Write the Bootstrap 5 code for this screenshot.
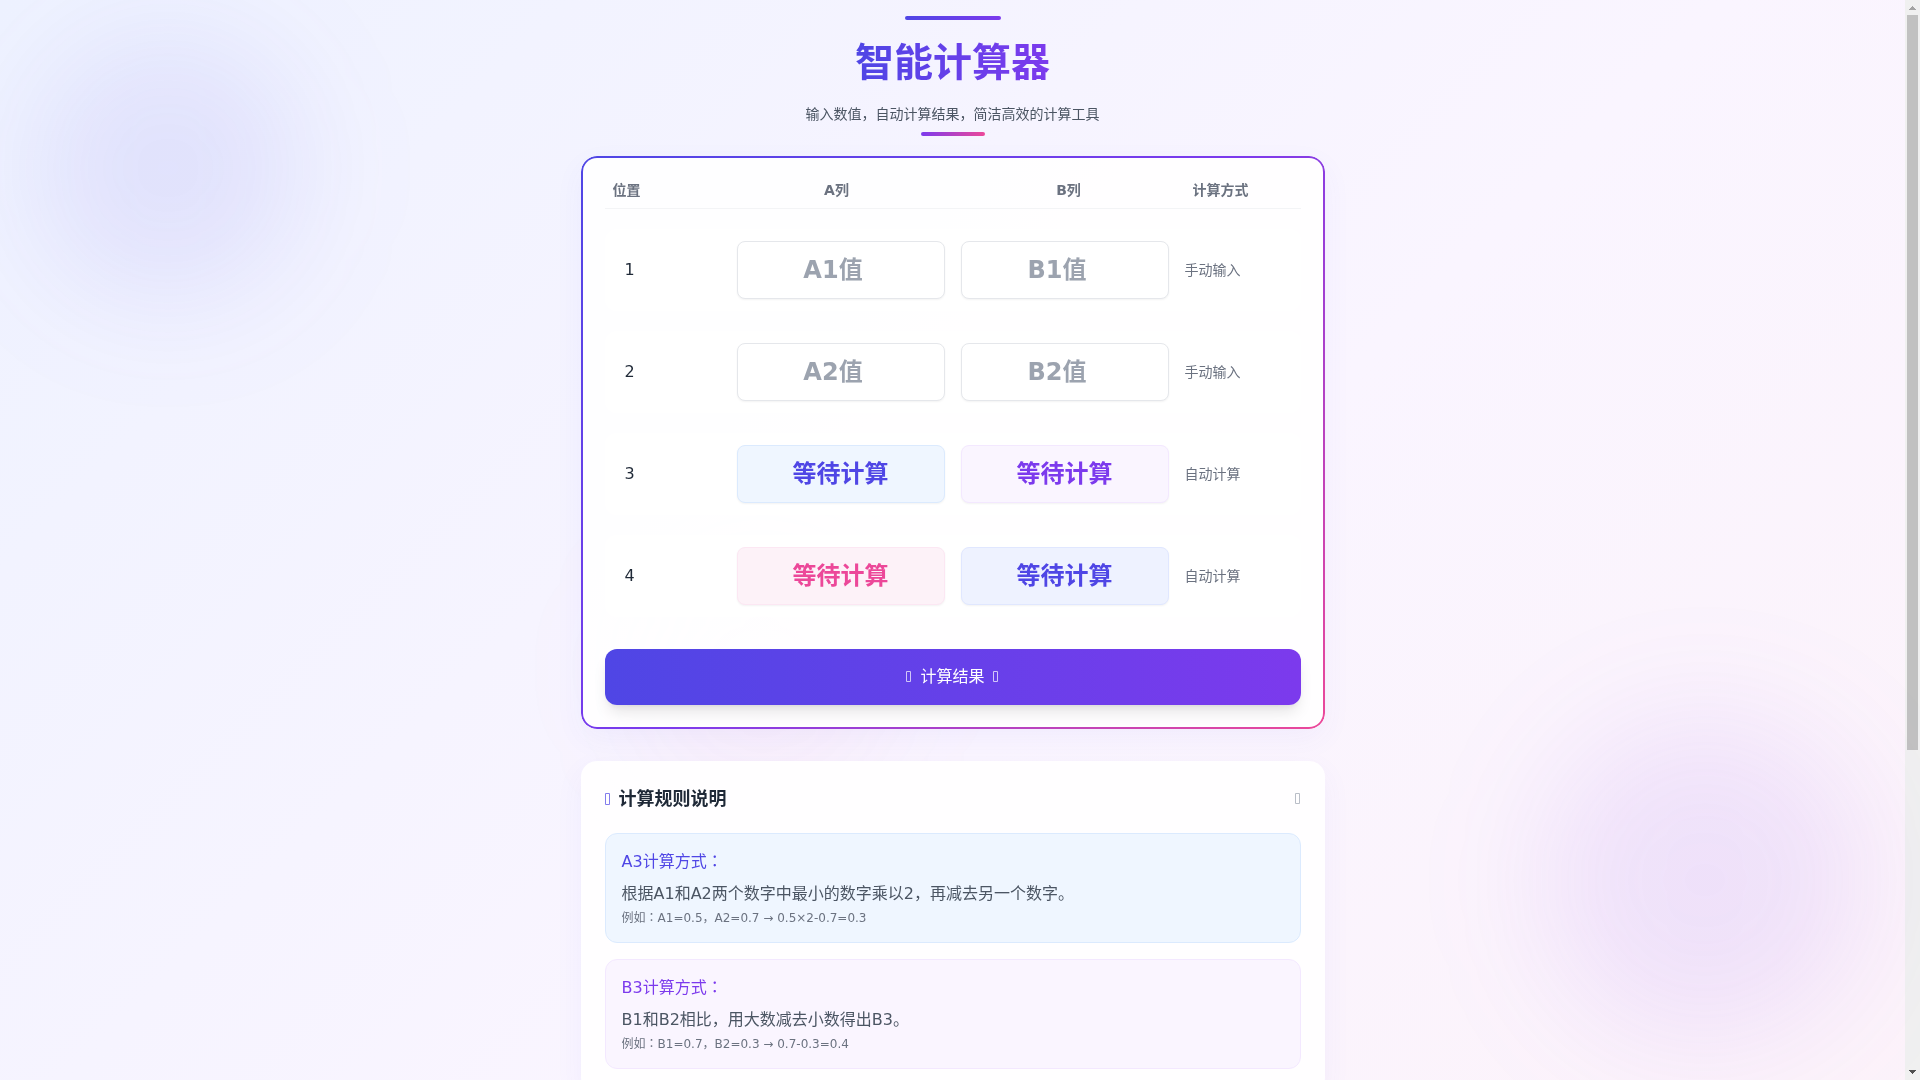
<!DOCTYPE html>
<html lang="zh-CN">
<head>
<meta charset="utf-8">
<meta name="viewport" content="width=device-width, initial-scale=1">
<title>智能计算器</title>
<link href="https://cdn.jsdelivr.net/npm/bootstrap@5.3.0/dist/css/bootstrap.min.css" rel="stylesheet">
<style>
  :root { --indigo: #4f46e5; --violet: #7c3aed; --pink: #ec4899; }
  body { font-family: "DejaVu Sans", "Noto Sans CJK SC", sans-serif; font-size: 16px; line-height: 24px; color: #1f2937; }
  .page-scroll { overflow-y: auto; scrollbar-width: none; }
  .scroll-rail { width: 15px; background: #f0f0f0; }
  .scroll-rail svg { flex: none; width: 15px; height: 15px; }
  .rail-track { padding: 0 2px; }
  .rail-thumb { height: 70%; background: #c1c1c1; }
  .page-bg { background: linear-gradient(135deg, #eef2ff, #faf5ff 50%, #fdf2f8); padding-bottom: 452px; }
  .glow { position: fixed; width: 256px; height: 256px; border-radius: 50%; filter: blur(64px); pointer-events: none; }
  .glow-a { top: 40px; left: 40px; background: rgba(79, 70, 229, .1); }
  .glow-b { width: 320px; height: 320px; right: 55px; bottom: 40px; background: rgba(124, 58, 237, .1); }
  .glow-c { top: 50%; left: 33%; background: rgba(236, 72, 153, .05); }
  .wrap { max-width: 768px; padding: 16px 12px 0; }
  .rule-bar { height: 4px; border-radius: 4px; }
  .bar-top { width: 96px; background: linear-gradient(90deg, var(--indigo), var(--violet)); }
  .bar-sub { width: 64px; background: linear-gradient(90deg, var(--violet), var(--pink)); }
  .page-title { padding-top: 2px; font-size: 39px; line-height: 50px; font-weight: 700; background: linear-gradient(90deg, var(--indigo), var(--violet)); -webkit-background-clip: text; background-clip: text; color: transparent; }
  .t14 { font-size: 14px; line-height: 20px; }
  .ink-soft { color: #4b5563; }
  .ink-mute { color: #6b7280; }
  .panel { border-radius: 16px; background: rgba(255, 255, 255, .9); padding: 24px; box-shadow: 0 10px 30px rgba(79, 70, 229, .05); }
  .panel-main { margin-top: 20px; }
  .panel-rules { margin-top: 32px; }
  .panel-edge::before { content: ""; position: absolute; inset: 0; border-radius: 16px; padding: 2px; background: linear-gradient(135deg, var(--indigo), var(--violet), var(--pink)); -webkit-mask: linear-gradient(#000 0 0) content-box, linear-gradient(#000 0 0); -webkit-mask-composite: xor; mask-composite: exclude; pointer-events: none; }
  .grid-head { padding-bottom: 8px; border-bottom: 1px solid #f3f4f6; font-weight: 700; }
  .grid-line { padding: 12px; margin-top: 20px; border-radius: 12px; background: rgba(255, 255, 255, .5); }
  .cell { height: 58px; padding: 12px; border: 1px solid #e5e7eb; border-radius: 8px; background: #fff; font-size: 24px; line-height: 32px; font-weight: 700; text-align: center; box-shadow: 0 1px 2px rgba(0, 0, 0, .05); display: block; width: 100%; }
  .cell::placeholder { color: #9ca3af; opacity: 1; }
  .tone-blue { background: #eff6ff; border-color: #dbeafe; }
  .tone-violet { background: #faf5ff; border-color: #f3e8ff; }
  .tone-pink { background: #fdf2f8; border-color: #fce7f3; }
  .tone-indigo { background: #eef2ff; border-color: #e0e7ff; }
  .ink-indigo { color: var(--indigo); }
  .ink-violet { color: var(--violet); }
  .ink-pink { color: var(--pink); }
  .calc-btn { margin-top: 32px; height: 56px; border: 0; border-radius: 12px; color: #fff; font-size: 16px; background: linear-gradient(90deg, var(--indigo), var(--violet)); box-shadow: 0 10px 15px -3px rgba(0, 0, 0, .1), 0 4px 6px -4px rgba(0, 0, 0, .1); }
  .rules-head { margin-bottom: 20px; }
  .rules-title { font-size: 18px; line-height: 28px; font-weight: 700; }
  .fold-btn { border: 0; background: none; padding: 0; color: #9ca3af; }
  .rule-box { border-width: 1px; border-style: solid; border-radius: 12px; padding: 16px; }
  .t12 { font-size: 12px; line-height: 16px; }
  .mid-colon { font-family: "Noto Sans CJK TC", sans-serif; line-height: 1; }
  .box-glyph { fill: none; stroke: currentColor; stroke-width: 1; opacity: .7; flex: none; }
</style>
</head>
<body class="d-flex vh-100 overflow-hidden">
<div class="page-scroll h-100 flex-grow-1">
  <div class="page-bg position-relative">
    <div class="glow glow-a"></div>
    <div class="glow glow-b"></div>
    <div class="glow glow-c"></div>
    <main class="wrap container-fluid mx-auto position-relative">
      <header class="d-flex flex-column align-items-center text-center">
        <div class="rule-bar bar-top"></div>
        <h1 class="page-title my-3">智能计算器</h1>
        <p class="t14 ink-soft mb-2">输入数值，自动计算结果，简洁高效的计算工具</p>
        <div class="rule-bar bar-sub"></div>
      </header>

      <section class="panel panel-edge panel-main position-relative">
        <div class="grid-head t14 ink-mute row g-0">
          <div class="col-2 px-2">位置</div>
          <div class="col-4 text-center">A列</div>
          <div class="col-4 text-center">B列</div>
          <div class="col-2 px-2">计算方式</div>
        </div>
        <div class="grid-line row g-0 align-items-center">
          <div class="col-2 px-2">1</div>
          <div class="col-4 px-2"><input class="cell" type="number" placeholder="A1值" aria-label="A1值"></div>
          <div class="col-4 px-2"><input class="cell" type="number" placeholder="B1值" aria-label="B1值"></div>
          <div class="col-2 px-2 t14 ink-mute">手动输入</div>
        </div>
        <div class="grid-line row g-0 align-items-center">
          <div class="col-2 px-2">2</div>
          <div class="col-4 px-2"><input class="cell" type="number" placeholder="A2值" aria-label="A2值"></div>
          <div class="col-4 px-2"><input class="cell" type="number" placeholder="B2值" aria-label="B2值"></div>
          <div class="col-2 px-2 t14 ink-mute">手动输入</div>
        </div>
        <div class="grid-line row g-0 align-items-center">
          <div class="col-2 px-2">3</div>
          <div class="col-4 px-2"><output class="cell tone-blue ink-indigo">等待计算</output></div>
          <div class="col-4 px-2"><output class="cell tone-violet ink-violet">等待计算</output></div>
          <div class="col-2 px-2 t14 ink-mute">自动计算</div>
        </div>
        <div class="grid-line row g-0 align-items-center">
          <div class="col-2 px-2">4</div>
          <div class="col-4 px-2"><output class="cell tone-pink ink-pink">等待计算</output></div>
          <div class="col-4 px-2"><output class="cell tone-indigo ink-indigo">等待计算</output></div>
          <div class="col-2 px-2 t14 ink-mute">自动计算</div>
        </div>
        <button type="button" class="calc-btn w-100 d-flex align-items-center justify-content-center gap-2">
          <svg class="box-glyph" width="6" height="12" viewBox="0 0 6 12" aria-hidden="true"><path d="M.5 .5h4v10h-4z"/></svg>
          <span>计算结果</span>
          <svg class="box-glyph" width="6" height="12" viewBox="0 0 6 12" aria-hidden="true"><path d="M.5 .5h4v10h-4z"/></svg>
        </button>
      </section>

      <section class="panel panel-rules">
        <div class="rules-head d-flex align-items-center justify-content-between">
          <h2 class="rules-title mb-0 d-flex align-items-center gap-2">
            <svg class="box-glyph ink-indigo" width="6" height="12" viewBox="0 0 6 12" aria-hidden="true"><path d="M.5 .5h4v11h-4z"/></svg>
            <span>计算规则说明</span>
          </h2>
          <button type="button" class="fold-btn d-flex" aria-label="折叠">
            <svg class="box-glyph" width="6" height="12" viewBox="0 0 6 12" aria-hidden="true"><path d="M.5 .5h4v10h-4z"/></svg>
          </button>
        </div>
        <div class="d-flex flex-column gap-3">
          <article class="rule-box tone-blue">
            <div class="ink-indigo mb-2">A3计算方式<span class="mid-colon" lang="zh-TW">：</span></div>
            <div class="ink-soft mb-1">根据A1和A2两个数字中最小的数字乘以2，再减去另一个数字。</div>
            <div class="t12 ink-mute">例如<span class="mid-colon" lang="zh-TW">：</span>A1=0.5，A2=0.7 → 0.5×2-0.7=0.3</div>
          </article>
          <article class="rule-box tone-violet">
            <div class="ink-violet mb-2">B3计算方式<span class="mid-colon" lang="zh-TW">：</span></div>
            <div class="ink-soft mb-1">B1和B2相比，用大数减去小数得出B3。</div>
            <div class="t12 ink-mute">例如<span class="mid-colon" lang="zh-TW">：</span>B1=0.7，B2=0.3 → 0.7-0.3=0.4</div>
          </article>
        </div>
      </section>
    </main>
  </div>
</div>
<div class="scroll-rail h-100 d-flex flex-column flex-shrink-0" aria-hidden="true">
  <svg viewBox="0 0 15 15" shape-rendering="crispEdges"><path d="M4 10h7v-1h-1v-1h-1v-1h-1v-1h-1v1h-1v1h-1v1h-1z" fill="#a3a3a3"/></svg>
  <div class="rail-track flex-grow-1"><div class="rail-thumb"></div></div>
  <svg viewBox="0 0 15 15" shape-rendering="crispEdges"><path d="M4 5h7v1h-1v1h-1v1h-1v1h-1v-1h-1v-1h-1v-1h-1z" fill="#505050"/></svg>
</div>
<script src="https://cdn.jsdelivr.net/npm/bootstrap@5.3.0/dist/js/bootstrap.bundle.min.js"></script>
</body>
</html>
